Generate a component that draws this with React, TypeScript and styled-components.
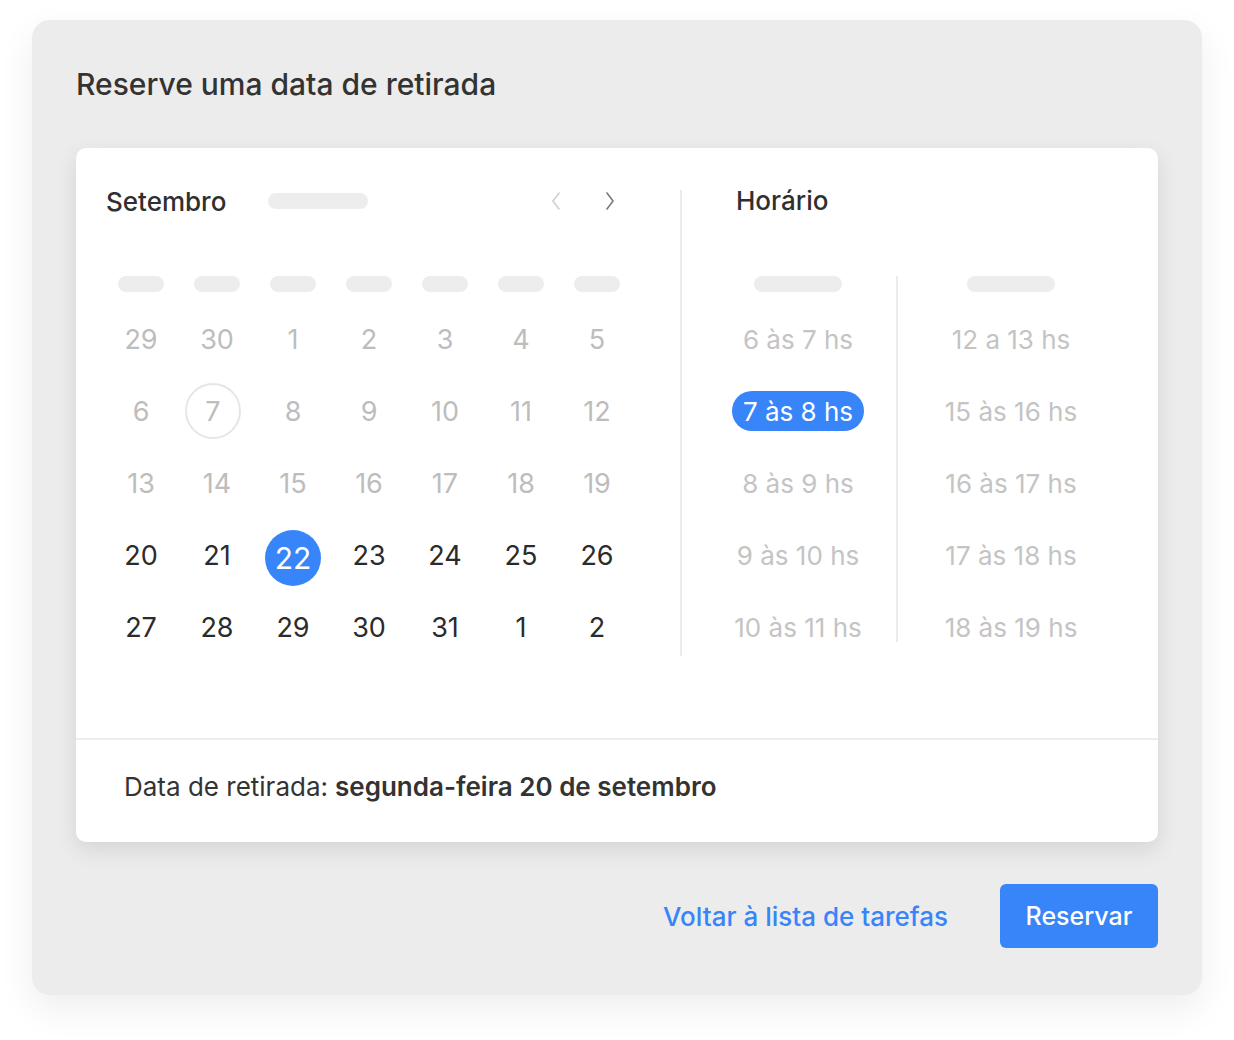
import React from "react";
import styled, { createGlobalStyle } from "styled-components";

const GlobalStyle = createGlobalStyle`
  * { box-sizing: border-box; }
  body {
    margin: 0;
    background: #ffffff;
    font-family: Inter, "Open Sans", Arial, sans-serif;
    color: #333333;
  }
`;

const BLUE = "#3785f8";

const Page = styled.div`
  padding: 20px 32px 45px;
`;

const Panel = styled.section`
  width: 1170px;
  background-color: #ececec;
  border-radius: 18px;
  box-shadow: 0 14px 36px rgba(0, 0, 0, 0.07);
  padding: 46px 44px 47px;
`;

const Title = styled.h1`
  margin: 0 0 46px;
  font-size: 30px;
  line-height: 36px;
  font-weight: 500;
  color: #333333;
`;

const Card = styled.div`
  background: #ffffff;
  border-radius: 10px;
  box-shadow: 0 8px 22px rgba(0, 0, 0, 0.1);
`;

const CardBody = styled.div`
  display: flex;
  height: 590px;
`;

const CalendarSide = styled.div`
  width: 604px;
  padding: 40px 0 0 27px;
`;

const MonthHeader = styled.div`
  display: flex;
  align-items: center;
  height: 26px;
  width: 532px;
  padding: 0 20px 0 3px;
`;

const MonthName = styled.h2`
  margin: 0;
  font-size: 26px;
  font-weight: 500;
  color: #2f2f2f;
`;

const Skeleton = styled.span<{ $w: number }>`
  display: block;
  flex-shrink: 0;
  width: ${(p) => p.$w}px;
  height: 16px;
  border-radius: 8px;
  background: #ededed;
`;

const YearSkeleton = styled(Skeleton)`
  margin-left: 42px;
`;

const NavButtons = styled.div`
  margin-left: auto;
  display: flex;
  gap: 44px;
  align-items: center;
`;

const NavButton = styled.button<{ $active?: boolean }>`
  border: none;
  background: none;
  padding: 0;
  width: 10px;
  height: 18px;
  color: ${(p) => (p.$active ? "#7a7a7a" : "#d0d0d0")};
  display: flex;
`;

const WeekRow = styled.div`
  display: grid;
  grid-template-columns: repeat(7, 76px);
  margin-top: 62px;
  justify-items: center;
`;

const DaysGrid = styled.div`
  display: grid;
  grid-template-columns: repeat(7, 76px);
  grid-auto-rows: 72px;
  margin-top: 11px;
  justify-items: center;
  align-items: center;
`;

type DayKind = "muted" | "normal" | "selected" | "today";

const Day = styled.span<{ $kind: DayKind }>`
  width: 56px;
  height: 56px;
  border-radius: 50%;
  display: flex;
  align-items: center;
  justify-content: center;
  font-size: 27px;
  font-weight: 400;
  color: ${(p) =>
    p.$kind === "selected" ? "#ffffff" : p.$kind === "normal" ? "#2b2b2b" : "#bdbdbd"};
  background: ${(p) => (p.$kind === "selected" ? BLUE : "transparent")};
  border: 2px solid ${(p) => (p.$kind === "today" ? "#e6e6e6" : "transparent")};
  ${(p) => p.$kind === "today" && "margin-right: 8px;"}
  ${(p) => p.$kind === "selected" && "margin-top: 6px; font-size: 30px;"}
`;

const TimeSide = styled.div`
  margin-top: 42px;
  height: 466px;
  flex: 1;
  border-left: 2px solid #ececec;
  padding-left: 18px;
`;

const TimeTitle = styled.h2`
  margin: 0 0 0 36px;
  font-size: 26px;
  line-height: 22px;
  font-weight: 500;
  color: #2f2f2f;
`;

const TimeColumns = styled.div`
  display: flex;
  margin-top: 64px;
`;

const TimeColumn = styled.div<{ $w: number; $divider?: boolean }>`
  width: ${(p) => p.$w}px;
  display: flex;
  flex-direction: column;
  align-items: center;
  height: 366px;
  ${(p) => p.$divider && "border-left: 2px solid #ececec;"}
`;

const TimeList = styled.div`
  display: flex;
  flex-direction: column;
  align-items: center;
  flex-shrink: 0;
  gap: 32px;
  margin-top: 27px;
`;

const TimeSlot = styled.span<{ $selected?: boolean }>`
  height: 40px;
  display: flex;
  align-items: center;
  padding: 0 11px;
  border-radius: 20px;
  font-size: 26px;
  white-space: nowrap;
  color: ${(p) => (p.$selected ? "#ffffff" : "#c4c4c4")};
  background: ${(p) => (p.$selected ? BLUE : "transparent")};
`;

const CardFooter = styled.div`
  border-top: 2px solid #ededed;
  height: 104px;
  display: flex;
  align-items: center;
  padding: 0 0 10px 48px;
  font-size: 26px;
  color: #333333;
`;

const Strong = styled.strong`
  font-weight: 600;
  margin-left: 7px;
`;

const Actions = styled.div`
  display: flex;
  justify-content: flex-end;
  align-items: center;
  gap: 52px;
  margin-top: 42px;
`;

const LinkButton = styled.button`
  border: none;
  background: none;
  padding: 0;
  font-family: inherit;
  font-size: 26px;
  font-weight: 500;
  color: ${BLUE};
`;

const PrimaryButton = styled.button`
  border: none;
  width: 158px;
  height: 64px;
  border-radius: 6px;
  background: ${BLUE};
  color: #ffffff;
  font-family: inherit;
  font-size: 25px;
  font-weight: 500;
`;

const Chevron = ({ dir }: { dir: "left" | "right" }) => (
  <svg width="10" height="18" viewBox="0 0 10 18" fill="none">
    <polyline
      points={dir === "left" ? "8,1 2,9 8,17" : "2,1 8,9 2,17"}
      stroke="currentColor"
      strokeWidth="1.6"
      strokeLinecap="round"
      strokeLinejoin="round"
    />
  </svg>
);

const days: { n: number; kind: DayKind }[] = [
  ...[29, 30, 1, 2, 3, 4, 5].map((n) => ({ n, kind: "muted" as DayKind })),
  ...[6, 7, 8, 9, 10, 11, 12].map((n) => ({
    n,
    kind: (n === 7 ? "today" : "muted") as DayKind,
  })),
  ...[13, 14, 15, 16, 17, 18, 19].map((n) => ({ n, kind: "muted" as DayKind })),
  ...[20, 21, 22, 23, 24, 25, 26].map((n) => ({
    n,
    kind: (n === 22 ? "selected" : "normal") as DayKind,
  })),
  ...[27, 28, 29, 30, 31, 1, 2].map((n) => ({ n, kind: "normal" as DayKind })),
];

const morning = ["6 às 7 hs", "7 às 8 hs", "8 às 9 hs", "9 às 10 hs", "10 às 11 hs"];
const afternoon = ["12 a 13 hs", "15 às 16 hs", "16 às 17 hs", "17 às 18 hs", "18 às 19 hs"];

export default function App() {
  return (
    <>
      <GlobalStyle />
      <Page>
        <Panel>
          <Title>Reserve uma data de retirada</Title>
          <Card>
            <CardBody>
              <CalendarSide>
                <MonthHeader>
                  <MonthName>Setembro</MonthName>
                  <YearSkeleton $w={100} />
                  <NavButtons>
                    <NavButton aria-label="Mês anterior">
                      <Chevron dir="left" />
                    </NavButton>
                    <NavButton $active aria-label="Próximo mês">
                      <Chevron dir="right" />
                    </NavButton>
                  </NavButtons>
                </MonthHeader>
                <WeekRow>
                  {Array.from({ length: 7 }).map((_, i) => (
                    <Skeleton key={i} $w={46} />
                  ))}
                </WeekRow>
                <DaysGrid>
                  {days.map((d, i) => (
                    <Day key={i} $kind={d.kind}>
                      {d.n}
                    </Day>
                  ))}
                </DaysGrid>
              </CalendarSide>
              <TimeSide>
                <TimeTitle>Horário</TimeTitle>
                <TimeColumns>
                  <TimeColumn $w={196}>
                    <Skeleton $w={88} />
                    <TimeList>
                      {morning.map((t) => (
                        <TimeSlot key={t} $selected={t === "7 às 8 hs"}>
                          {t}
                        </TimeSlot>
                      ))}
                    </TimeList>
                  </TimeColumn>
                  <TimeColumn $w={228} $divider>
                    <Skeleton $w={88} />
                    <TimeList>
                      {afternoon.map((t) => (
                        <TimeSlot key={t}>{t}</TimeSlot>
                      ))}
                    </TimeList>
                  </TimeColumn>
                </TimeColumns>
              </TimeSide>
            </CardBody>
            <CardFooter>
              Data de retirada:<Strong>segunda-feira 20 de setembro</Strong>
            </CardFooter>
          </Card>
          <Actions>
            <LinkButton>Voltar à lista de tarefas</LinkButton>
            <PrimaryButton>Reservar</PrimaryButton>
          </Actions>
        </Panel>
      </Page>
    </>
  );
}
